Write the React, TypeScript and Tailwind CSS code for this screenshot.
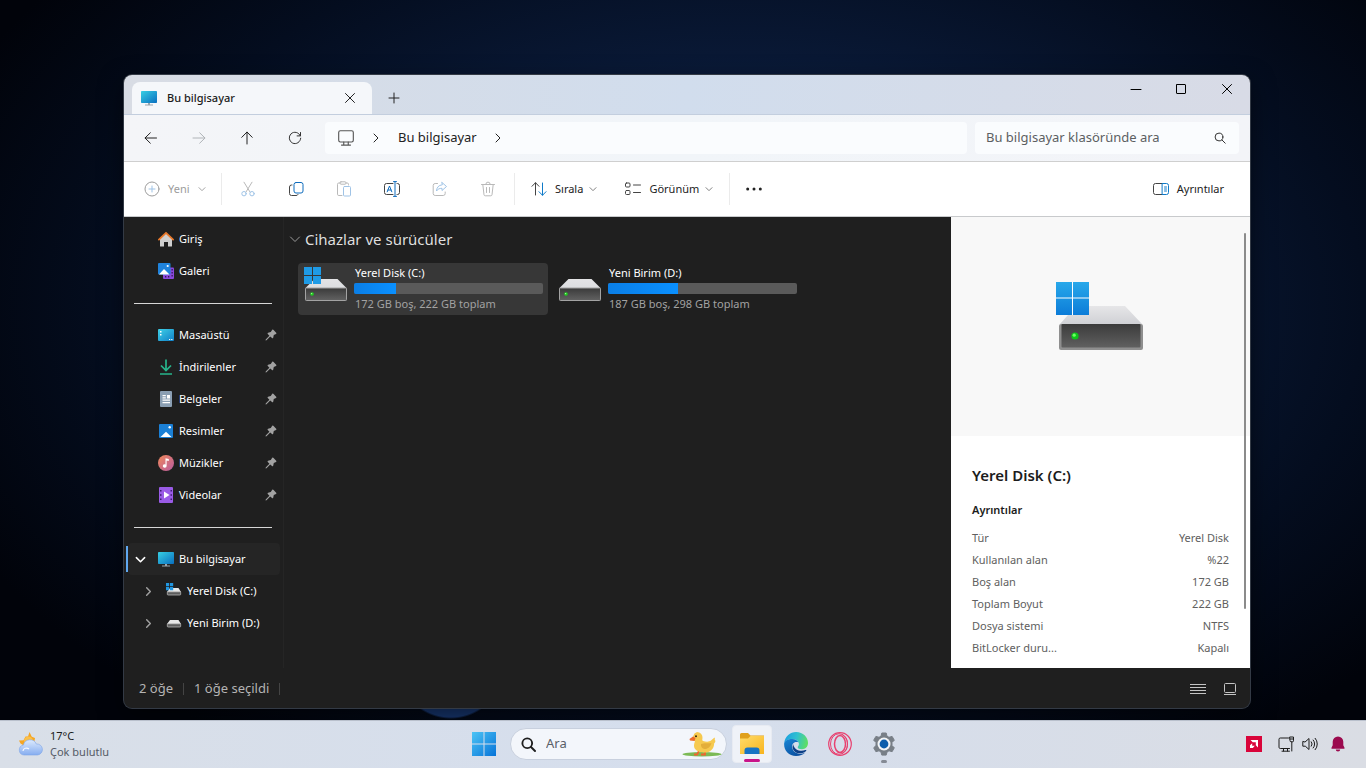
import type { ReactNode } from "react";
import clsx from "clsx";

type IconProps = { className?: string; weight?: number };

/* ---------- shared drawings ---------- */

function WindowsLogo({ className }: IconProps) {
  return (
    <svg viewBox="0 0 24 24" className={className} aria-hidden="true">
      <defs>
        <linearGradient id="winLogo" x1="0" y1="0" x2="24" y2="24" gradientUnits="userSpaceOnUse">
          <stop offset="0" stopColor="#4cc4f5" />
          <stop offset="1" stopColor="#0673d8" />
        </linearGradient>
      </defs>
      <path d="M0 0h11.5v11.5H0zM12.5 0H24v11.5H12.5zM0 12.5h11.5V24H0zM12.5 12.5H24V24H12.5z" fill="url(#winLogo)" />
    </svg>
  );
}

function DriveIcon({ className, system }: IconProps & { system?: boolean }) {
  return (
    <svg viewBox="0 0 44 36" className={className} aria-hidden="true">
      <defs>
        <linearGradient id="driveTop" x1="0" y1="0" x2="0" y2="1">
          <stop offset="0" stopColor="#e3e3e5" />
          <stop offset="1" stopColor="#dcdde0" />
        </linearGradient>
        <linearGradient id="driveFront" x1="0" y1="0" x2="0" y2="1">
          <stop offset="0" stopColor="#3a3a3a" />
          <stop offset="1" stopColor="#626262" />
        </linearGradient>
      </defs>
      <path d="M10.5 13h23L43 22.5H1z" fill="url(#driveTop)" />
      <rect x="1.5" y="22" width="41" height="12.5" rx="0.8" fill="url(#driveFront)" stroke="#a3a3a3" />
      <circle cx="8" cy="28" r="1.8" fill="#1fd01f" />
      <circle cx="7.6" cy="27.6" r="0.7" fill="#a8ff9c" />
      {system && <path d="M0 1h8v8H0zM9 1h8v8H9zM0 10h8v8H0zM9 10h8v8H9z" fill="#1f9be6" />}
    </svg>
  );
}

function BigDrive({ className }: IconProps) {
  return (
    <svg viewBox="0 0 88 70" className={className} aria-hidden="true">
      <defs>
        <linearGradient id="bigTop" x1="0" y1="0" x2="0" y2="1">
          <stop offset="0" stopColor="#e6e6e8" />
          <stop offset="1" stopColor="#d0d1d5" />
        </linearGradient>
        <linearGradient id="bigFront" x1="0" y1="0" x2="0" y2="1">
          <stop offset="0" stopColor="#3b3b3b" />
          <stop offset="1" stopColor="#606060" />
        </linearGradient>
        <linearGradient id="bigLogo" x1="0" y1="0" x2="0" y2="1">
          <stop offset="0" stopColor="#28a8ea" />
          <stop offset="1" stopColor="#0c7cd8" />
        </linearGradient>
      </defs>
      <path d="M20 25h49l17 18H4z" fill="url(#bigTop)" />
      <rect x="3" y="43" width="84" height="26" rx="2" fill="#8f8f8f" />
      <rect x="5.5" y="43" width="79" height="23.5" rx="1" fill="url(#bigFront)" />
      <circle cx="19" cy="55" r="3.6" fill="#0fc61b" />
      <circle cx="18.2" cy="54.2" r="1.6" fill="#6bff62" />
      <path d="M0 1h33v33H0z" fill="#fff" />
      <path d="M0 1h16v15.5H0zM17 1h16v15.5H17zM0 17.5h16V34H0zM17 17.5h16V34H17z" fill="url(#bigLogo)" />
    </svg>
  );
}

function MonitorColor({ className }: IconProps) {
  return (
    <svg viewBox="0 0 16 16" className={className} aria-hidden="true">
      <defs>
        <linearGradient id="monitor" x1="0" y1="0" x2="1" y2="1">
          <stop offset="0" stopColor="#37cfe4" />
          <stop offset="1" stopColor="#0a6fc0" />
        </linearGradient>
      </defs>
      <rect x="0" y="1" width="16" height="12" rx="0.8" fill="url(#monitor)" />
      <path d="M7 13h2v1.4h3v1H4v-1h3z" fill="#9aa5ad" />
    </svg>
  );
}

function Stroke({ className, children, size = 16, weight = 1 }: IconProps & { children: ReactNode; size?: number }) {
  return (
    <svg
      viewBox={`0 0 ${size} ${size}`}
      className={clsx("shrink-0", className)}
      fill="none"
      stroke="currentColor"
      strokeWidth={weight}
      strokeLinecap="round"
      strokeLinejoin="round"
      aria-hidden="true"
    >
      {children}
    </svg>
  );
}

const ChevronDown = ({ className, weight }: IconProps) => (
  <Stroke className={className} size={12} weight={weight}>
    <path d="M1.5 4 6 8.5 10.5 4" />
  </Stroke>
);

const ChevronRight = ({ className, weight }: IconProps) => (
  <Stroke className={className} size={12} weight={weight}>
    <path d="M4 2l4 4-4 4" />
  </Stroke>
);

const CloseIcon = ({ className }: IconProps) => (
  <Stroke className={className} size={12}>
    <path d="M1.5 1.5l9 9M10.5 1.5l-9 9" />
  </Stroke>
);

const SearchIcon = ({ className, weight }: IconProps) => (
  <Stroke className={className} size={12} weight={weight}>
    <circle cx="5" cy="5" r="3.9" />
    <path d="M8 8l3.2 3.2" />
  </Stroke>
);

const PinIcon = ({ className }: IconProps) => (
  <svg viewBox="0 0 12 12" className={className} aria-hidden="true">
    <path
      d="M7.2.8a.8.8 0 0 1 1.1 0l2.9 2.9a.8.8 0 0 1-.2 1.2L8.8 6.100l-.6 2.600a.7.7 0 0 1-1.200.3L5.200 7.600 1.500 11.300l-.9.200.1-.9L4.400 6.800 2.800 5a.7.7 0 0 1 .3-1.200l2.700-.7z"
      fill="#a2a2a2"
    />
  </svg>
);

/* ---------- navigation pane icons ---------- */

const HomeIcon = () => (
  <svg viewBox="0 0 16 16" className="size-4" aria-hidden="true">
    <path d="M2 7.5 8 2l6 5.5V15a.6.6 0 0 1-.6.6H10V11H6v4.6H2.600A.6.6 0 0 1 2 15z" fill="#cfcfcf" />
    <path d="M.9 8.600 8 1.800l7.100 6.800" fill="none" stroke="#e8782a" strokeWidth="1.8" strokeLinecap="round" strokeLinejoin="round" />
  </svg>
);

const GalleryIcon = () => (
  <svg viewBox="0 0 16 16" className="size-4" aria-hidden="true">
    <rect x="5" y="4.5" width="11" height="11.5" rx="1" fill="#8a48dc" />
    <path d="M13.5 6h1.3v1.4h-1.3zM13.5 9h1.3v1.4h-1.3zM13.5 12h1.3v1.4h-1.3zM10 13h1.3v1.4H10zM7 13h1.3v1.4H7z" fill="#33185c" />
    <rect x="0" y="0" width="12.5" height="11.5" rx="1" fill="#1f83dc" />
    <path d="M1 11.500 6 6l5.500 5.500z" fill="#fff" />
    <circle cx="9.7" cy="3" r="1.1" fill="#fff" />
  </svg>
);

const DesktopIcon = () => (
  <svg viewBox="0 0 16 16" className="size-4" aria-hidden="true">
    <defs>
      <linearGradient id="desk" x1="0" y1="0" x2="1" y2="1">
        <stop offset="0" stopColor="#3fd0e6" />
        <stop offset="1" stopColor="#1180c8" />
      </linearGradient>
    </defs>
    <rect y="2" width="16" height="12" rx="1" fill="url(#desk)" />
    <path d="M2 4h1.5v1.5H2zM2 7h1.5v1.5H2zM11 12h1.2v1H11zM13.2 12h1.2v1h-1.2z" fill="#fff" />
  </svg>
);

const DownloadIcon = () => (
  <svg viewBox="0 0 16 16" className="size-4" fill="none" stroke="#27b58c" strokeWidth="1.7" aria-hidden="true">
    <path d="M8 .5V11M3 6.500 8 11.500l5-5M2 15h12" />
  </svg>
);

const DocumentIcon = () => (
  <svg viewBox="0 0 16 16" className="size-4" aria-hidden="true">
    <rect x="2" y="0" width="12" height="16" rx="1" fill="#8b9fb3" />
    <path d="M4.500 4h3.300v1.200H4.500zM4.500 6.200h3.300v1.200H4.500zM9 4h3v3.400H9zM4.500 8.600H12v1.200H4.500zM4.500 11H12v1.200H4.500z" fill="#fff" />
  </svg>
);

const PictureIcon = () => (
  <svg viewBox="0 0 16 16" className="size-4" aria-hidden="true">
    <rect x="1" y="1" width="14" height="14" rx="1" fill="#1b80d6" />
    <path d="M2.500 14 8 8.800l5.500 5.200z" fill="#fff" />
    <circle cx="11.7" cy="4.3" r="1.2" fill="#fff" />
  </svg>
);

const MusicIcon = () => (
  <svg viewBox="0 0 16 16" className="size-4" aria-hidden="true">
    <defs>
      <linearGradient id="music" x1="0" y1="0" x2="1" y2="1">
        <stop offset="0" stopColor="#f0895a" />
        <stop offset="1" stopColor="#b85aa0" />
      </linearGradient>
    </defs>
    <circle cx="8" cy="8" r="8" fill="url(#music)" />
    <path d="M7.500 3.200 10.800 4v2l-2.200-.5V11a1.900 1.700 0 1 1-1.100-1.500z" fill="#fff" />
  </svg>
);

const VideoIcon = () => (
  <svg viewBox="0 0 16 16" className="size-4" aria-hidden="true">
    <rect x="1" y="0" width="14" height="16" rx="1" fill="#9a5be6" />
    <path d="M2 3h1.500v1.500H2zM2 7.200h1.500v1.500H2zM2 11.400h1.500v1.500H2zM12.500 3H14v1.500h-1.500zM12.500 7.200H14v1.500h-1.500zM12.500 11.400H14v1.500h-1.500z" fill="#3d1d72" />
    <path d="M6 4.500v7L11.500 8z" fill="#fff" />
  </svg>
);

const SmallDrive = ({ system }: { system?: boolean }) => (
  <svg viewBox="0 0 16 16" className="size-4" aria-hidden="true">
    <path d="M4 5h8.500L15 9H1z" fill="#e8e8e8" />
    <rect x="1.300" y="8.800" width="13.400" height="3.200" rx="0.8" fill="#5d5d5d" stroke="#c4c4c4" strokeWidth="0.7" />
    {system && <path d="M0 0h3.200v3.200H0zM4 0h3.200v3.200H4zM0 4h3.200v3.200H0zM4 4h3.200v3.200H4z" fill="#2196e0" />}
  </svg>
);

/* ---------- title bar and address row ---------- */

function TitleBar() {
  return (
    <header className="flex h-10 items-end border-b border-[#c3cede] bg-linear-to-r from-[#d8dce4] via-[#d1dded] to-[#d8dbe6] pl-2">
      <div className="flex h-8 w-60 items-center rounded-t-lg bg-[#f5f7fa] pr-3 pl-[9px]">
        <MonitorColor className="size-4" />
        <span className="ml-[10px] flex-1 text-[11px] font-medium text-[#1b1b1b]">Bu bilgisayar</span>
        <button aria-label="Sekmeyi kapat" className="p-1 text-[#222]">
          <CloseIcon className="size-3" />
        </button>
      </div>
      <button aria-label="Yeni sekme" className="ml-2.5 flex h-8 w-6 items-center justify-center text-[#222]">
        <Stroke className="size-3" size={12}>
          <path d="M6 1v10M1 6h10" />
        </Stroke>
      </button>
      <div className="ml-auto flex self-start text-black">
        <button aria-label="Simge durumuna küçült" className="flex h-7 w-[45px] items-center justify-center">
          <Stroke className="size-3" size={12}>
            <path d="M1 6.5h10" />
          </Stroke>
        </button>
        <button aria-label="Ekranı kapla" className="flex h-7 w-[45px] items-center justify-center">
          <Stroke className="size-3" size={12}>
            <rect x="1.5" y="1.5" width="9" height="9" rx="0.5" />
          </Stroke>
        </button>
        <button aria-label="Kapat" className="flex h-7 w-[47px] items-center justify-center">
          <CloseIcon className="size-3" />
        </button>
      </div>
    </header>
  );
}

function AddressRow() {
  return (
    <div className="flex h-[47px] items-center border-b border-[#cfcfcf] bg-linear-to-r from-[#f4f5f8] via-[#f1f5f9] to-[#f3f4f8] pr-[11px] pl-[3px]">
      <button aria-label="Geri" className="flex h-8 w-12 items-center justify-center text-[#222]">
        <Stroke className="size-4">
          <path d="M13.500 8H2.200M7.300 2.800 2 8l5.300 5.200" />
        </Stroke>
      </button>
      <button aria-label="İleri" className="flex h-8 w-12 items-center justify-center text-[#b0b4b8]">
        <Stroke className="size-4">
          <path d="M2 8h11.800M8.700 2.800 14 8l-5.300 5.200" />
        </Stroke>
      </button>
      <button aria-label="Yukarı" className="flex h-8 w-12 items-center justify-center text-[#222]">
        <Stroke className="size-4">
          <path d="M8 14V2.200M2.800 7.300 8 2l5.200 5.300" />
        </Stroke>
      </button>
      <button aria-label="Yenile" className="flex h-8 w-12 items-center justify-center text-[#333]">
        <Stroke className="size-4">
          <path d="M13.300 5.800A5.700 5.700 0 1 0 13.700 8.200M13.500 2.500v3.400h-3.400" />
        </Stroke>
      </button>

      <nav aria-label="Adres" className="ml-1.5 flex h-8 flex-1 items-center rounded-sm bg-[#fafcfe] pl-3 text-[#222]">
        <Stroke className="size-[18px] text-[#555]">
          <rect x="1.5" y="1.5" width="13" height="10" rx="1.5" />
          <path d="M6 11.500v2.500M10 11.500v2.500M4 14.300h8" />
        </Stroke>
        <ChevronRight className="ml-[15px] size-3" />
        <button className="ml-4 text-[13px]">Bu bilgisayar</button>
        <ChevronRight className="ml-[15px] size-3" />
      </nav>

      <label className="ml-2 flex h-8 w-[264px] items-center rounded-sm bg-[#fafcfe] pr-[13px] pl-[11px]">
        <input
          type="search"
          aria-label="Klasörde ara"
          placeholder="Bu bilgisayar klasöründe ara"
          className="min-w-0 flex-1 bg-transparent text-[13px] text-[#222] outline-none placeholder:text-[#5c5f62]"
        />
        <SearchIcon className="size-3 text-[#333]" />
      </label>
    </div>
  );
}

/* ---------- command bar ---------- */

function IconButton({ label, disabled, children }: { label: string; disabled?: boolean; children: ReactNode }) {
  return (
    <button
      aria-label={label}
      disabled={disabled}
      className={clsx("flex h-8 w-12 items-center justify-center", disabled ? "text-[#b9b9b9]" : "text-[#444]")}
    >
      {children}
    </button>
  );
}

const Divider = () => <span className="h-8 w-px bg-[#ebebeb]" />;

function CommandBar() {
  return (
    <div className="flex h-[55px] items-center border-b border-[#c8cacc] bg-white pr-[26px] text-[11px] text-[#222]">
      <button disabled className="ml-5 flex h-8 w-[77px] items-center text-[#9c9c9c]">
        <Stroke className="size-4">
          <circle cx="8" cy="8" r="7" />
          <path d="M8 5v6M5 8h6" stroke="#9fc3e6" />
        </Stroke>
        <span className="ml-2">Yeni</span>
        <ChevronDown className="ml-2 size-2" weight={1.4} />
      </button>
      <Divider />
      <div className="mx-0.5 flex">
        <IconButton label="Kes" disabled>
          <Stroke className="size-4">
            <path d="M4 1.200 10 11M12 1.200 6 11" />
            <circle cx="4" cy="12.7" r="2.2" stroke="#9fc3e6" />
            <circle cx="12" cy="12.7" r="2.2" stroke="#9fc3e6" />
          </Stroke>
        </IconButton>
        <IconButton label="Kopyala">
          <Stroke className="size-4">
            <rect x="6" y="1.5" width="9" height="10.5" rx="2" stroke="#0f6cbd" />
            <path d="M4 4H3.500a2 2 0 0 0-2 2v6.500a2 2 0 0 0 2 2h4.500a2 2 0 0 0 2-1" />
          </Stroke>
        </IconButton>
        <IconButton label="Yapıştır" disabled>
          <Stroke className="size-4">
            <path d="M6 14.500H2.800a1.300 1.300 0 0 1-1.300-1.300V3.300A1.300 1.300 0 0 1 2.800 2H4M10 2h1.200a1.300 1.300 0 0 1 1.300 1.300V4" />
            <rect x="4" y="0.8" width="6" height="2.4" rx="1" />
            <rect x="7.5" y="5.5" width="7" height="9.5" rx="1" stroke="#9fc3e6" />
          </Stroke>
        </IconButton>
        <IconButton label="Yeniden adlandır">
          <Stroke className="size-4">
            <path d="M9 2.500H2.500a2 2 0 0 0-2 2v7a2 2 0 0 0 2 2H9M13 2.500h.5a2 2 0 0 1 2 2v7a2 2 0 0 1-2 2H13" />
            <path d="M11 .7v14.600M9.500.6h3M9.500 15.400h3M3.200 10.800 5.500 5l2.300 5.800M4 9h3" stroke="#0f6cbd" />
          </Stroke>
        </IconButton>
        <IconButton label="Paylaş" disabled>
          <Stroke className="size-4">
            <path d="M5.500 2.500H3.200a2 2 0 0 0-2 2v8a2 2 0 0 0 2 2h8a2 2 0 0 0 2-2V11" />
            <path d="M10 1.500 14.500 5.500 10 9.500V7.300C7.500 7.300 5.800 8 4.500 10c.2-3.500 2-5.800 5.500-6.200z" stroke="#9fc3e6" />
          </Stroke>
        </IconButton>
        <IconButton label="Sil" disabled>
          <Stroke className="size-4">
            <path d="M1.500 3.500h13M5.800 3.300a2.200 2.200 0 0 1 4.400 0M2.800 3.500 4 13.800a1.200 1.200 0 0 0 1.200 1h5.600a1.200 1.200 0 0 0 1.200-1l1.200-10.300M6.500 6.500v5M9.500 6.500v5" />
          </Stroke>
        </IconButton>
      </div>
      <Divider />
      <button className="ml-4 flex h-8 items-center">
        <Stroke className="size-4 text-[#444]">
          <path d="M4.500 14V1.800M1 5.300l3.500-3.600L8 5.300" />
          <path d="M11.500 2v12.200M8 10.700l3.500 3.600 3.500-3.600" stroke="#0f7ac8" />
        </Stroke>
        <span className="ml-2">Sırala</span>
        <ChevronDown className="ml-1.5 size-2 text-[#777]" weight={1.4} />
      </button>
      <button className="ml-7 flex h-8 items-center">
        <Stroke className="size-4 text-[#444]">
          <rect x="0.5" y="2" width="4.500" height="4" rx="1" />
          <rect x="0.5" y="9.500" width="4.500" height="4" rx="1" />
          <path d="M8.500 4h7M8.500 11.500h7" />
        </Stroke>
        <span className="ml-2">Görünüm</span>
        <ChevronDown className="ml-1.5 size-2 text-[#777]" weight={1.4} />
      </button>
      <span className="ml-4 h-8 w-px bg-[#ebebeb]" />
      <button aria-label="Diğer" className="flex h-8 w-12 items-center justify-center">
        <svg viewBox="0 0 16 4" className="h-1 w-4" fill="#222" aria-hidden="true">
          <circle cx="1.7" cy="2" r="1.5" />
          <circle cx="8" cy="2" r="1.5" />
          <circle cx="14.3" cy="2" r="1.5" />
        </svg>
      </button>
      <button className="ml-auto flex h-8 items-center">
        <Stroke className="size-4 text-[#444]">
          <path d="M9.500 2.500H2.500a2 2 0 0 0-2 2v7a2 2 0 0 0 2 2h7" />
          <path d="M9.500 2.500h4a2 2 0 0 1 2 2v7a2 2 0 0 1-2 2h-4zM11.500 6h2M11.500 8h2M11.500 10h2" stroke="#0f7ac8" />
        </Stroke>
        <span className="ml-2">Ayrıntılar</span>
      </button>
    </div>
  );
}

/* ---------- navigation pane ---------- */

const libraries = [
  { name: "Masaüstü", icon: <DesktopIcon /> },
  { name: "İndirilenler", icon: <DownloadIcon /> },
  { name: "Belgeler", icon: <DocumentIcon /> },
  { name: "Resimler", icon: <PictureIcon /> },
  { name: "Müzikler", icon: <MusicIcon /> },
  { name: "Videolar", icon: <VideoIcon /> },
];

function NavRow({ name, icon, pinned }: { name: string; icon: ReactNode; pinned?: boolean }) {
  return (
    <li>
      <a href="#" className="flex h-8 items-center gap-[5px] pr-1.5 pl-[34px]">
        {icon}
        <span className="flex-1">{name}</span>
        {pinned && <PinIcon className="size-3" />}
      </a>
    </li>
  );
}

const Rule = () => (
  <li className="flex h-8 items-center pr-[11px] pl-[10px]">
    <hr className="w-full border-[#d6d6d6]" />
  </li>
);

function Sidebar() {
  return (
    <aside className="w-[160px] shrink-0 border-r border-[#252525] pt-1.5 text-[11px] text-white">
      <ul>
        <NavRow name="Giriş" icon={<HomeIcon />} />
        <NavRow name="Galeri" icon={<GalleryIcon />} />
        <Rule />
        {libraries.map((item) => (
          <NavRow key={item.name} name={item.name} icon={item.icon} pinned />
        ))}
        <Rule />
        <li className="flex h-8 items-center pl-0.5">
          <span className="h-[26px] w-0.5 bg-[#60a8f0]" />
          <a href="#" className="mr-[3px] flex h-8 flex-1 items-center rounded-sm bg-[#252525] pl-[7px]">
            <ChevronDown className="size-[11px]" weight={1.7} />
            <MonitorColor className="mr-[5px] ml-3 size-4" />
            Bu bilgisayar
          </a>
        </li>
        <li>
          <a href="#" className="flex h-8 items-center pl-[19px]">
            <ChevronRight className="mr-3 size-[11px] text-[#a0a0a0]" weight={1.6} />
            <SmallDrive system />
            <span className="ml-[5px]">Yerel Disk (C:)</span>
          </a>
        </li>
        <li>
          <a href="#" className="flex h-8 items-center pl-[19px]">
            <ChevronRight className="mr-3 size-[11px] text-[#a0a0a0]" weight={1.6} />
            <SmallDrive />
            <span className="ml-[5px]">Yeni Birim (D:)</span>
          </a>
        </li>
      </ul>
    </aside>
  );
}

/* ---------- content ---------- */

const drives = [
  { name: "Yerel Disk (C:)", info: "172 GB boş, 222 GB toplam", used: 22, system: true, selected: true },
  { name: "Yeni Birim (D:)", info: "187 GB boş, 298 GB toplam", used: 37, system: false, selected: false },
];

function DriveList() {
  return (
    <main className="min-w-0 flex-1 pt-2.5">
      <h2 className="flex h-6 items-center gap-1 pl-[5px] text-[15px] text-[#dedede]">
        <ChevronDown className="size-3 text-[#9a9a9a]" />
        Cihazlar ve sürücüler
      </h2>
      <div className="mt-3 flex flex-wrap gap-1 pl-[14px]">
        {drives.map((drive) => (
          <button
            key={drive.name}
            className={clsx(
              "flex h-[52px] w-[250px] rounded-sm pt-[3px] pr-[5px] pl-1.5 text-left text-[11px]",
              drive.selected && "bg-[#373737]"
            )}
          >
            <DriveIcon system={drive.system} className="h-9 w-11 shrink-0" />
            <span className="ml-1.5 flex flex-1 flex-col">
              <span className="h-[17px] pl-px leading-[14px] text-white">{drive.name}</span>
              <span
                role="meter"
                aria-label={drive.name}
                aria-valuenow={drive.used}
                className="block h-[11px] overflow-hidden rounded-xs bg-[#5a5a5a]"
              >
                <span
                  className="block h-full bg-linear-to-r from-[#0a7ee6] to-[#0a90ff]"
                  style={{ width: `${drive.used}%` }}
                />
              </span>
              <span className="mt-0.5 pl-px leading-4 text-[#a2a2a2]">{drive.info}</span>
            </span>
          </button>
        ))}
      </div>
    </main>
  );
}

const details = [
  ["Tür", "Yerel Disk"],
  ["Kullanılan alan", "%22"],
  ["Boş alan", "172 GB"],
  ["Toplam Boyut", "222 GB"],
  ["Dosya sistemi", "NTFS"],
  ["BitLocker duru...", "Kapalı"],
];

function DetailsPane() {
  return (
    <aside className="flex w-[299px] shrink-0 bg-white">
      <div className="flex flex-1 flex-col">
        <div className="flex h-[219px] justify-center bg-[#f8f8f8] pt-16">
          <BigDrive className="mr-[-4px] ml-px h-[70px] w-[88px]" />
        </div>
        <div className="pr-[15px] pl-[21px]">
          <h2 className="mt-[27px] text-[15px] leading-6 font-semibold text-[#1c1c1c]">Yerel Disk (C:)</h2>
          <h3 className="mt-[15px] text-[11px] leading-4 font-semibold text-[#1c1c1c]">Ayrıntılar</h3>
          <table className="mt-[9px] w-full text-[11px] text-[#606060]">
            <tbody>
              {details.map(([label, value]) => (
                <tr key={label} className="h-[22px]">
                  <th scope="row" className="p-0 text-left font-normal">
                    {label}
                  </th>
                  <td className="p-0 text-right">{value}</td>
                </tr>
              ))}
            </tbody>
          </table>
        </div>
      </div>
      <div className="bg-[linear-gradient(#f8f8f8_219px,#ffffff_219px)] pt-4 pr-1">
        <div className="h-[376px] w-0.5 rounded bg-[#8b8b8b]" />
      </div>
    </aside>
  );
}

function StatusBar() {
  return (
    <footer className="flex h-10 items-center pt-px pr-3 pl-[15px] text-[13px] text-[#b4b4b4]">
      <span>2 öğe</span>
      <span className="mx-2.5 h-3 w-px bg-[#444]" />
      <span>1 öğe seçildi</span>
      <span className="mx-2.5 h-3 w-px bg-[#444]" />
      <button aria-label="Ayrıntı görünümü" className="ml-auto">
        <svg viewBox="0 0 16 12" className="h-3 w-4" fill="none" stroke="#c4c4c4" aria-hidden="true">
          <path d="M0 1.500h16M0 4.500h16M0 7.500h16M0 10.500h16" />
        </svg>
      </button>
      <button aria-label="Büyük simgeler" className="ml-4">
        <svg viewBox="0 0 16 14" className="h-3.5 w-4" fill="none" stroke="#c4c4c4" aria-hidden="true">
          <rect x="2.5" y="1.5" width="11" height="9" rx="1" />
          <path d="M2 12.500h12" />
        </svg>
      </button>
    </footer>
  );
}

/* ---------- taskbar ---------- */

const WeatherIcon = () => (
  <svg viewBox="0 0 26 26" className="size-[26px]" aria-hidden="true">
    <defs>
      <linearGradient id="cloud" x1="0" y1="0" x2="0" y2="1">
        <stop offset="0" stopColor="#dceafd" />
        <stop offset="1" stopColor="#86adf0" />
      </linearGradient>
    </defs>
    <path d="M11.500 1 13.800 5.800 17 7l-1 6-11 1-2.500-1.500L1 9.500l4.500-.3L7.500 5.500 10 5.600z" fill="#f5a623" />
    <circle cx="10.5" cy="10" r="4.5" fill="#fbc04a" />
    <path d="M6 24a5 5 0 0 1-.6-9.900A6.800 6.800 0 0 1 18.300 13 5.500 5.500 0 0 1 19.500 24z" fill="url(#cloud)" stroke="#7ea4e8" strokeWidth="0.6" />
    <path d="M5 20a3.500 3 0 0 1 6-2" fill="none" stroke="#f3f8ff" strokeWidth="1.2" />
  </svg>
);

const DuckIcon = () => (
  <svg viewBox="0 0 40 26" className="h-[26px] w-10" aria-hidden="true">
    <ellipse cx="20" cy="23.3" rx="19.5" ry="2.2" fill="#7cba55" />
    <path d="M17 20l-2 3.500h-3M23 20v3.500h-4" fill="none" stroke="#f0652f" strokeWidth="1.8" />
    <path d="M15 1a5.500 5.500 0 0 1 5.500 6c-.2 1.600-.5 2.400.5 3 2.500.8 6 1.200 8-.4l3.500-3c.8.8.2 2.400.2 2.400 1.200.2.700 2.500-.5 3.200C32 18 28.500 21.500 22 21.500c-6 0-10-2.800-10-6.700 0-2 .6-3.300 1-4.300A5.500 5.500 0 0 1 15 1z" fill="#f6c94f" />
    <path d="M19 13c3-1.500 7-.5 10.500-1-1 4-4 6.300-7 6-2.500-.3-4-2.500-3.500-5z" fill="#e3ae3a" />
    <path d="M11 5.500 7.500 8l.5 1.600 4.500.4 1-3z" fill="#ee6a2c" />
    <circle cx="14" cy="5.2" r="1" fill="#33230d" />
  </svg>
);

const ExplorerIcon = () => (
  <svg viewBox="0 0 24 24" className="size-6" aria-hidden="true">
    <defs>
      <linearGradient id="folder" x1="0" y1="0" x2="1" y2="1">
        <stop offset="0" stopColor="#ffdc6a" />
        <stop offset="1" stopColor="#f8b41e" />
      </linearGradient>
    </defs>
    <path d="M0 2.500A1.500 1.500 0 0 1 1.500 1H8l2.500 2.500H24V21H0z" fill="#e0a01c" />
    <path d="M0 6.500h8L10.500 4H24v18H0z" fill="url(#folder)" />
    <path d="M4.500 22v-3.500a3 3 0 0 1 3-3h9a3 3 0 0 1 3 3V22z" fill="#1874c4" />
  </svg>
);

const EdgeIcon = () => (
  <svg viewBox="0 0 24 24" className="size-6" aria-hidden="true">
    <defs>
      <linearGradient id="edgeTop" x1="0" y1="0.3" x2="1" y2="0.5">
        <stop offset="0" stopColor="#1b9fe0" />
        <stop offset="0.5" stopColor="#2fc0d0" />
        <stop offset="1" stopColor="#5fdf62" />
      </linearGradient>
      <linearGradient id="edgeLow" x1="0" y1="0" x2="0.6" y2="1">
        <stop offset="0" stopColor="#1786d6" />
        <stop offset="1" stopColor="#0c50a0" />
      </linearGradient>
    </defs>
    <path d="M.3 10.500C1.200 4.500 6 0 12.200 0 19 0 24 5 24 11c0 3.800-2.700 6.200-6 6.200-2.800 0-4.300-1-4.300-2 0-.8 1.200-1.200 1.200-3.200 0-2.500-2.500-5-6.200-5C4.500 7 1.500 8.800.3 10.500z" fill="url(#edgeTop)" />
    <path d="M.1 12C.2 8.800 4 7 8.200 7c3.200 0 5.300 1.600 6.200 3.200-4.700-1-6.700 2-6.200 5.300.5 3.800 4 6.300 8 6.300 2 0 3.700-.5 5.200-1.500C19.200 22.800 16 24 12 24 5 24 0 18.700.1 12z" fill="url(#edgeLow)" />
    <path d="M9.200 12.200c-2.500 5.500 3 10.500 9.300 8.800 1.400-.4 2.600-1 3.600-2 .5-.6 0-1.300-.8-.9-4.800 2.100-11.300-.3-12.100-5.900z" fill="#0d3f86" />
  </svg>
);

const OperaIcon = () => (
  <svg viewBox="0 0 24 24" className="size-6" fill="none" stroke="#e8416f" aria-hidden="true">
    <circle cx="12" cy="12" r="11.3" strokeWidth="1.2" />
    <ellipse cx="11" cy="12" rx="8.5" ry="10.3" strokeWidth="1" />
    <ellipse cx="12" cy="12" rx="5.5" ry="8.5" strokeWidth="1.5" />
    <path d="M14 2.500c3 1 5.500 4.500 5.500 9.500s-2.500 8.500-5.500 9.500" strokeWidth="1" />
  </svg>
);

const SettingsIcon = () => (
  <svg viewBox="0 0 24 24" className="size-6" aria-hidden="true">
    <path
      d="M9.800 1h4.400l.8 3.200 2 1.100 3.100-.9 2.200 3.800-2.300 2.300v3l2.300 2.300-2.200 3.900-3.100-.9-2 1.200-.8 3.100H9.800L9 20l-2-1.200-3.100.9-2.200-3.900L4 13.500v-3L1.700 8.200l2.200-3.800 3.100.9 2-1.100z"
      fill="#787f87"
      stroke="#787f87"
      strokeLinejoin="round"
    />
    <circle cx="12" cy="12" r="6.5" fill="#f2f4f6" />
    <circle cx="12" cy="12" r="4.4" fill="#0d5dab" />
  </svg>
);

function TaskButton({ label, children, active, running }: { label: string; children: ReactNode; active?: boolean; running?: boolean }) {
  return (
    <button
      aria-label={label}
      className={clsx(
        "relative flex h-[38px] w-10 items-center justify-center rounded-sm",
        active && "border border-[#e8ebf2] bg-[#eff2f8]"
      )}
    >
      {children}
      {active && <span className="absolute bottom-0 h-[3px] w-4 rounded-full bg-[#c9148a]" />}
      {running && <span className="absolute bottom-0 h-[3px] w-1.5 rounded-full bg-[#858b95]" />}
    </button>
  );
}

function Taskbar() {
  return (
    <footer className="grid h-12 grid-cols-[1fr_auto_1fr] items-center border-t border-[#b9c0cc] bg-linear-to-r from-[#d9dfe8] via-[#d5deed] to-[#dadde4] pb-px pl-0.5">
      <button className="flex items-center gap-1.5 justify-self-start pl-4 text-left">
        <WeatherIcon />
        <span className="text-[11px] leading-4">
          <span className="block text-[#1b1b1b]">17°C</span>
          <span className="block text-[#555b66]">Çok bulutlu</span>
        </span>
      </button>

      <div className="flex items-center gap-1">
        <TaskButton label="Başlat">
          <WindowsLogo className="size-6" />
        </TaskButton>
        <label className="mr-px ml-0.5 flex h-8 w-[217px] items-center rounded-full border border-[#c8d0de] bg-[#f3f6fb] pr-1 pl-2.5">
          <SearchIcon className="size-[15px] text-[#1f1f1f]" weight={1.5} />
          <input
            aria-label="Ara"
            placeholder="Ara"
            className="ml-2.5 min-w-0 flex-1 bg-transparent text-[13px] outline-none placeholder:text-[#5a5f68]"
          />
          <DuckIcon />
        </label>
        <TaskButton label="Dosya Gezgini" active>
          <ExplorerIcon />
        </TaskButton>
        <TaskButton label="Edge">
          <EdgeIcon />
        </TaskButton>
        <TaskButton label="Opera">
          <OperaIcon />
        </TaskButton>
        <TaskButton label="Ayarlar" running>
          <SettingsIcon />
        </TaskButton>
      </div>

      <div className="flex items-center justify-self-end pr-5 text-[#1c1c1c]">
        <button aria-label="AMD">
          <svg viewBox="0 0 16 16" className="size-4" aria-hidden="true">
            <path d="M0 0h16v16H0z" fill="#d9043a" />
            <path d="M4.500 4H12v7.500L9.800 9.300V6.200H6.700z" fill="#fff" />
            <path d="M6.200 7.200v2.600h2.600L6.900 12H4V9.200z" fill="#fff" />
          </svg>
        </button>
        <button aria-label="Ağ" className="ml-4">
          <Stroke className="size-4">
            <path d="M10.500 2H2.300A1.300 1.300 0 0 0 1 3.300v8A1.300 1.300 0 0 0 2.300 12.500h9.200M5.500 12.500V15M9.500 12.500V15M4 15.200h7.500" />
            <path d="M12 1h3.500v3.800a1 1 0 0 1-1 1H13a1 1 0 0 1-1-1zM12 3h3.500M13.800 6v9" />
          </Stroke>
        </button>
        <button aria-label="Ses" className="ml-2">
          <Stroke className="size-4">
            <path d="M.8 5.800v4.400h2.500L7 13.500v-11L3.300 5.800zM9.300 5.800a3.500 3.500 0 0 1 0 4.400M11.200 4a6 6 0 0 1 0 8M13.200 2.300a8.500 8.500 0 0 1 0 11.400" />
          </Stroke>
        </button>
        <button aria-label="Bildirimler" className="ml-3">
          <svg viewBox="0 0 16 16" className="size-4" fill="#9b0a4e" aria-hidden="true">
            <path d="M8 .5a5.300 5.300 0 0 1 5.300 5.300v3.500l1.200 2.500a.6.6 0 0 1-.5.9H2a.6.6 0 0 1-.5-.9l1.200-2.500V5.800A5.300 5.300 0 0 1 8 .5zM5.800 13.500h4.400a2.200 2 0 0 1-4.400 0z" />
          </svg>
        </button>
      </div>
    </footer>
  );
}

export default function App() {
  return (
    <div className="flex min-h-screen flex-col bg-[#01040c] bg-[radial-gradient(circle_at_33%_665px,#17366f_52px,transparent_54px),radial-gradient(ellipse_at_54%_40%,#12295a_0%,#0a1a38_35%,#040d1f_60%,#01030a_82%)] font-['Noto_Sans','Open_Sans',sans-serif]">
      <div className="flex flex-1 flex-col pt-[75px] pr-[116px] pb-3 pl-[124px]">
        <section
          aria-label="Bu bilgisayar"
          className="flex flex-1 flex-col overflow-hidden rounded-lg bg-[#1f1f1f] shadow-[0_8px_24px_rgba(0,0,0,0.5)] ring-1 ring-[#333a45]"
        >
          <TitleBar />
          <AddressRow />
          <CommandBar />
          <div className="flex flex-1">
            <Sidebar />
            <DriveList />
            <DetailsPane />
          </div>
          <StatusBar />
        </section>
      </div>
      <Taskbar />
    </div>
  );
}
